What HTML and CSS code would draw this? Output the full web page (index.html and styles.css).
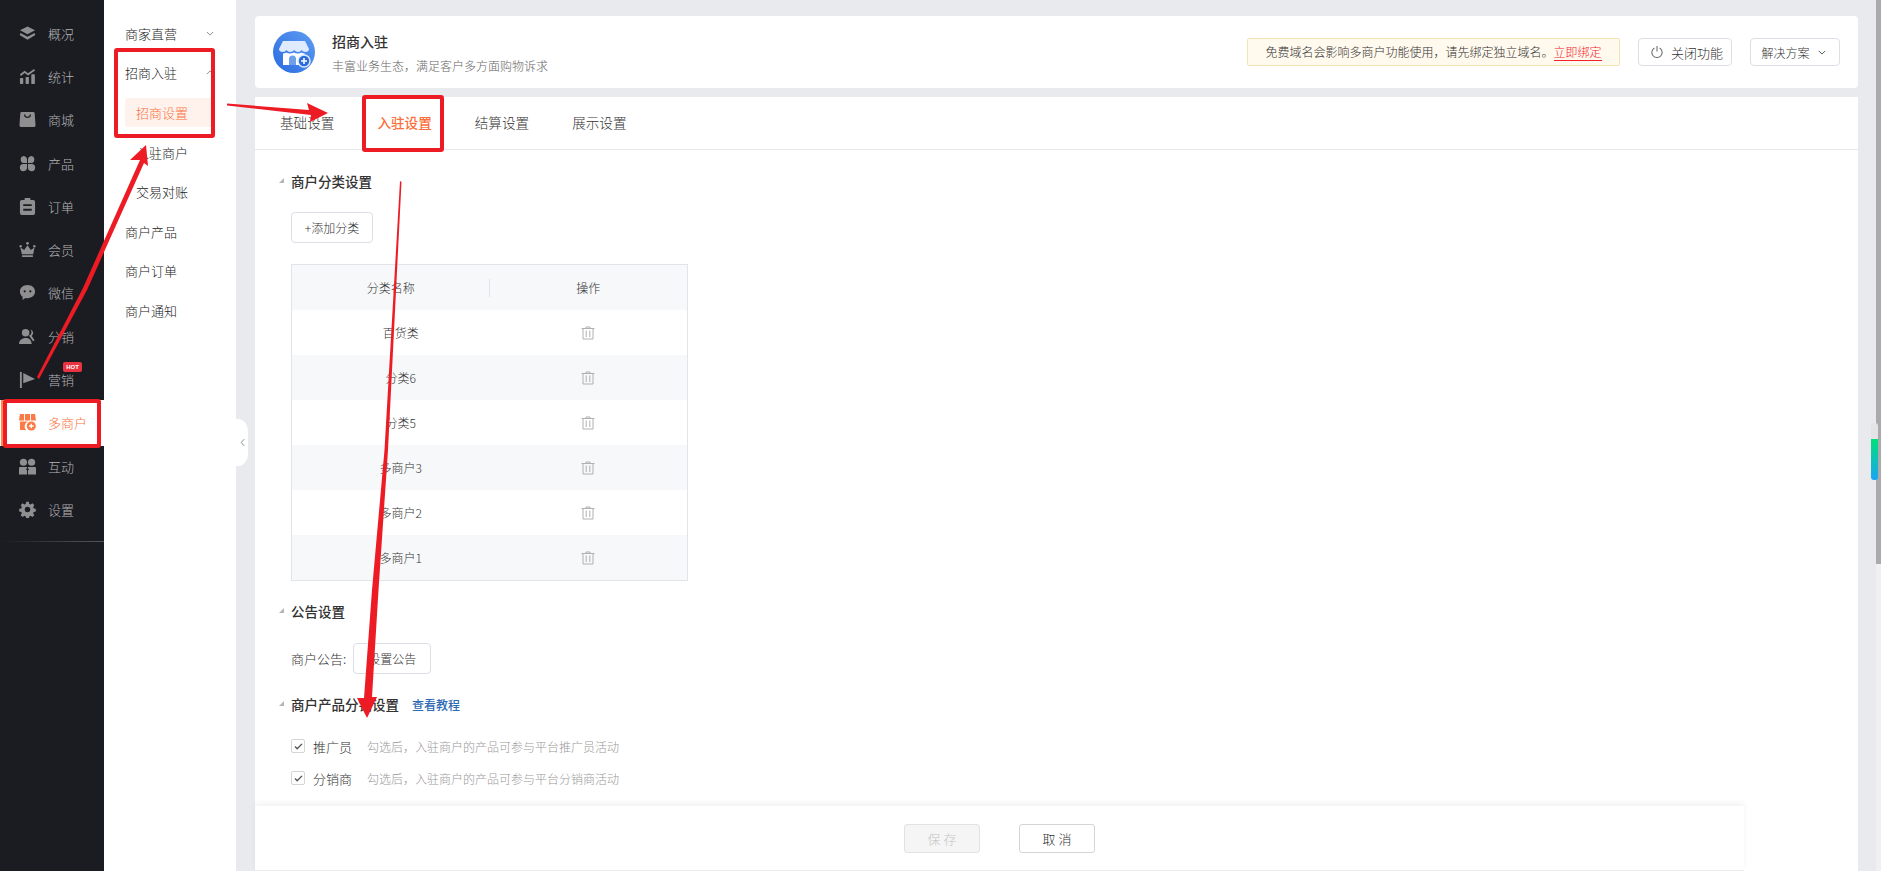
FILE: index.html
```html
<!DOCTYPE html>
<html lang="zh">
<head>
<meta charset="utf-8">
<title>招商入驻</title>
<link rel="stylesheet" href="styles.css">
</head>
<body>
<div class="app">
  <aside class="rail">
    <ul class="rail-list">
      <li class="rail-item"><svg class="ri" viewBox="0 0 18 18"><path d="M9 1.500 17 5.600 9 9.800 1 5.600z"/><path d="M1.600 8.600 9 12.400l7.400-3.800 .9 1.900L9 15.600.7 10.500z"/></svg>概况</li>
      <li class="rail-item"><svg class="ri" viewBox="0 0 18 18"><path d="M1 6.500 6 3l3.500 2.500L16 1l1 1.600-7.400 5.300L6 5.400 2 8.400z"/><rect x="1" y="10.500" width="3.500" height="6.500" rx=".8"/><rect x="7" y="9.500" width="3.500" height="7.500" rx=".8"/><rect x="13" y="6.500" width="3.800" height="10.500" rx=".8"/></svg>统计</li>
      <li class="rail-item"><svg class="ri" viewBox="0 0 18 18"><path fill-rule="evenodd" d="M3 1h12a1.600 1.600 0 0 1 1.600 1.500L17.500 15a2 2 0 0 1-2 2h-13a2 2 0 0 1-2-2L1.400 2.500A1.600 1.600 0 0 1 3 1zM5.300 3.600a3.700 3.700 0 0 0 7.400 0h-1.300a2.400 2.400 0 0 1-4.800 0z"/></svg>商城</li>
      <li class="rail-item"><svg class="ri" viewBox="0 0 18 18"><path d="M5 1a4 4 0 0 1 3.500 3.900V8.500H4.900A3.800 3.800 0 0 1 5 1zM13 1a3.800 3.800 0 0 1 .1 7.500H9.500V4.900A4 4 0 0 1 13 1zM4.900 9.500h3.600v3.600A3.800 3.800 0 1 1 4.900 9.500zM9.500 9.500h3.600a3.800 3.800 0 1 1-3.600 3.600z"/></svg>产品</li>
      <li class="rail-item"><svg class="ri" viewBox="0 0 18 18"><path fill-rule="evenodd" d="M6 0h6v2h3a2 2 0 0 1 2 2v12a2 2 0 0 1-2 2H3a2 2 0 0 1-2-2V4a2 2 0 0 1 2-2h3zM4.500 6.500v2h9v-2zM4.500 11.500v2h9v-2z"/></svg>订单</li>
      <li class="rail-item"><svg class="ri" viewBox="0 0 18 18"><circle cx="9" cy="2.500" r="1.500"/><circle cx="1.800" cy="5.500" r="1.300"/><circle cx="16.200" cy="5.500" r="1.300"/><path d="M9 4.500 12.500 9.500 16.500 7 15 14H3L1.500 7 5.500 9.500z"/><rect x="3" y="15" width="12" height="2" rx="1"/></svg>会员</li>
      <li class="rail-item"><svg class="ri" viewBox="0 0 18 18"><path fill-rule="evenodd" d="M9 1c4.700 0 8 3 8 7s-3.300 7-8 7c-.8 0-1.500-.1-2.200-.2L3.800 17v-3.500C2 12.200 1 10.200 1 8c0-4 3.300-7 8-7zM6 6.500a1.200 1.200 0 1 0 0 2.400 1.200 1.200 0 0 0 0-2.400zM12 6.500a1.200 1.200 0 1 0 0 2.400 1.200 1.200 0 0 0 0-2.400z"/></svg>微信</li>
      <li class="rail-item"><svg class="ri" viewBox="0 0 18 18"><circle cx="7" cy="5" r="4"/><path d="M0 17c0-4 3-6.500 7-6.500s6 2 6.500 6.500z"/><path d="M12 1.500a4 4 0 0 1 1.500 7l3 4.500-1.700 1-3-4.300-1.300-1.500a4 4 0 0 0 1.500-6.700z"/></svg>分销</li>
      <li class="rail-item"><svg class="ri" viewBox="0 0 18 18"><rect x="1" y="1" width="2" height="17"/><path d="M4.500 2 17 8.500 4.500 13z"/></svg>营销<span class="hot">HOT</span></li>
      <li class="rail-item rail-on"><svg class="ri" viewBox="0 0 18 18"><path d="M1 0h4.300v7H0zM6.300 0h5.400v7H6.300zM12.700 0H17l1 7h-5.300z"/><path d="M1 8h8.500a5.500 5.500 0 0 0-2 9H1z"/><circle cx="13" cy="12.700" r="4.800"/><path d="M12.300 10.300h1.400v1.700h1.700v1.400h-1.700v1.700h-1.400v-1.700h-1.700V12h1.700z" fill="#fff"/></svg>多商户</li>
      <li class="rail-item"><svg class="ri" viewBox="0 0 18 18"><circle cx="4.700" cy="4.500" r="3.800"/><circle cx="13.300" cy="4.500" r="3.800"/><path d="M1 9.500h7.500v1.500a1 1 0 0 0 0 2v4.500H0V10.500a1 1 0 0 1 1-1zM9.500 9.500H17a1 1 0 0 1 1 1v7H9.500V13a1 1 0 0 0 0-2z"/></svg>互动</li>
      <li class="rail-item"><svg class="ri" viewBox="0 0 18 18"><path fill-rule="evenodd" d="M7.400 0h3.200l.5 2.500 1.600.7 2.200-1.400 2.200 2.200-1.400 2.200.7 1.600 2.500.5v3.200l-2.500.5-.7 1.600 1.400 2.200-2.200 2.200-2.200-1.400-1.600.7-.5 2.500H7.400l-.5-2.500-1.600-.7-2.200 1.400L.9 15.800l1.400-2.200-.7-1.600L-.9 11.500V8.300l2.500-.5.7-1.600L.9 4l2.200-2.200 2.200 1.400 1.600-.7zM9 5.700a3.300 3.300 0 1 0 0 6.600 3.300 3.300 0 0 0 0-6.600z" transform="translate(1 .9) scale(.89)"/></svg>设置</li>
    </ul>
    <div class="rail-line"></div>
  </aside>

  <nav class="sub">
    <div class="sub-item">商家直营<svg class="chev" viewBox="0 0 10 6"><path d="M1 1l4 4 4-4"/></svg></div>
    <div class="sub-item">招商入驻<svg class="chev" viewBox="0 0 10 6"><path d="M1 5l4-4 4 4"/></svg></div>
    <div class="sub-child sub-on">招商设置</div>
    <div class="sub-child">入驻商户</div>
    <div class="sub-child">交易对账</div>
    <div class="sub-item">商户产品</div>
    <div class="sub-item">商户订单</div>
    <div class="sub-item">商户通知</div>
    <div class="collapse"><svg viewBox="0 0 6 10"><path d="M5 1 1.500 5 5 9"/></svg></div>
  </nav>

  <main class="main">
    <header class="head">
      <svg class="logo" viewBox="0 0 42 42">
        <defs><linearGradient id="lg" x1="0" y1="1" x2="1" y2="0"><stop offset="0" stop-color="#2a6be0"/><stop offset="1" stop-color="#5e9cf2"/></linearGradient></defs>
        <circle cx="21" cy="21" r="21" fill="url(#lg)"/>
        <path d="M10 10h22l4 8c0 1.800-1.600 3-3.500 3-1.700 0-2.900-.9-3.800-2-.8 1.200-2.200 2-3.700 2s-3-.8-3.900-2c-.9 1.200-2.300 2-3.900 2s-2.800-.8-3.700-2c-.9 1.100-2.100 2-3.800 2C7.600 21 6 19.800 6 18z" fill="#dfeafc"/>
        <path d="M10 22.500c1.200 0 2.300-.3 3.200-1 1.100.7 2.300 1 3.600 1s2.900-.4 4.100-1c1.200.6 2.500 1 3.900 1s2.600-.3 3.700-1c.9.6 2 1 3.200 1V34H10z" fill="#fff"/>
        <path d="M16 34v-6a3.500 3.500 0 0 1 7 0v6z" fill="#6f9fe9"/>
        <circle cx="31" cy="30" r="6" fill="#2a6be0" stroke="#dfeafc" stroke-width="1.500"/>
        <path d="M30.200 27h1.600v2.200H34v1.600h-2.200V33h-1.600v-2.200H28v-1.600h2.200z" fill="#fff"/>
      </svg>
      <div class="head-text">
        <div class="head-title">招商入驻</div>
        <div class="head-desc">丰富业务生态，满足客户多方面购物诉求</div>
      </div>
      <div class="head-actions">
        <div class="notice">免费域名会影响多商户功能使用，请先绑定独立域名。<a class="notice-link">立即绑定</a></div>
        <button class="btn btn-power"><svg class="power" viewBox="0 0 14 16"><path d="M4 3.300a6 6 0 1 0 6 0"/><path d="M7 1v6.500"/></svg>关闭功能</button>
        <button class="btn btn-solve">解决方案<svg class="chev chev-dark" viewBox="0 0 10 6"><path d="M1 1l4 4 4-4"/></svg></button>
      </div>
    </header>

    <section class="panel">
      <div class="tabs">
        <div class="tab">基础设置</div>
        <div class="tab tab-on">入驻设置</div>
        <div class="tab">结算设置</div>
        <div class="tab">展示设置</div>
      </div>
      <div class="body">
        <h3 class="sec">商户分类设置</h3>
        <button class="btn btn-add">+添加分类</button>
        <div class="table">
          <div class="tr th"><div class="td td-name">分类名称</div><div class="td">操作</div></div>
          <div class="tr"><div class="td td-val">百货类</div><div class="td"><svg class="trash" viewBox="0 0 14 14"><path d="M.5 2.500h13M5 2.500V1h4v1.500M2 2.500v10.500h10V2.500M5.200 4.500V11M8.800 4.500V11"/></svg></div></div>
          <div class="tr tr-alt"><div class="td td-val">分类6</div><div class="td"><svg class="trash" viewBox="0 0 14 14"><path d="M.5 2.500h13M5 2.500V1h4v1.500M2 2.500v10.500h10V2.500M5.200 4.500V11M8.800 4.500V11"/></svg></div></div>
          <div class="tr"><div class="td td-val">分类5</div><div class="td"><svg class="trash" viewBox="0 0 14 14"><path d="M.5 2.500h13M5 2.500V1h4v1.500M2 2.500v10.500h10V2.500M5.200 4.500V11M8.800 4.500V11"/></svg></div></div>
          <div class="tr tr-alt"><div class="td td-val">多商户3</div><div class="td"><svg class="trash" viewBox="0 0 14 14"><path d="M.5 2.500h13M5 2.500V1h4v1.500M2 2.500v10.500h10V2.500M5.200 4.500V11M8.800 4.500V11"/></svg></div></div>
          <div class="tr"><div class="td td-val">多商户2</div><div class="td"><svg class="trash" viewBox="0 0 14 14"><path d="M.5 2.500h13M5 2.500V1h4v1.500M2 2.500v10.500h10V2.500M5.200 4.500V11M8.800 4.500V11"/></svg></div></div>
          <div class="tr tr-alt"><div class="td td-val">多商户1</div><div class="td"><svg class="trash" viewBox="0 0 14 14"><path d="M.5 2.500h13M5 2.500V1h4v1.500M2 2.500v10.500h10V2.500M5.200 4.500V11M8.800 4.500V11"/></svg></div></div>
        </div>
        <h3 class="sec sec-notice">公告设置</h3>
        <div class="notice-row"><span class="label">商户公告:</span><button class="btn btn-set">设置公告</button></div>
        <h3 class="sec sec-prod">商户产品分销设置<a class="tut">查看教程</a></h3>
        <label class="check"><span class="box"><svg viewBox="0 0 10 8"><path d="M1 4l2.500 2.500L9 1"/></svg></span><span class="check-name">推广员</span><span class="hint">勾选后，入驻商户的产品可参与平台推广员活动</span></label>
        <label class="check"><span class="box"><svg viewBox="0 0 10 8"><path d="M1 4l2.500 2.500L9 1"/></svg></span><span class="check-name">分销商</span><span class="hint">勾选后，入驻商户的产品可参与平台分销商活动</span></label>
      </div>
    </section>

    <footer class="foot">
      <button class="btn-foot btn-save">保 存</button>
      <button class="btn-foot btn-cancel">取 消</button>
    </footer>
  </main>

  <div class="scroll"><div class="scroll-thumb"></div></div>
</div>

<svg class="marks" viewBox="0 0 1881 871">
  <g fill="none" stroke="#ed1c24" stroke-width="4">
    <rect x="116" y="50" width="97" height="86" rx="1"/>
    <rect x="5" y="401" width="94" height="45" rx="1"/>
    <rect x="364" y="97" width="78" height="53" rx="1"/>
  </g>
  <g fill="#ed1c24">
    <path d="M227 103.500 309 110 307 103 328 113 310 122 311 115 227 105.500z"/>
    <path d="M146 145 130 160 140 160 83 288 37 377 39 379 87 290 144 163 148 166z"/>
    <path d="M400 181 401.500 182 388 450 378.500 590 372 697 377 697 367 718 357 698 364 698 372 590 384.500 450z"/>
  </g>
</svg>
</body>
</html>
```

FILE: styles.css
```css
* { box-sizing: border-box; }
html, body { margin: 0; height: 100%; overflow: hidden; }
body {
  font-family: "Noto Sans CJK SC", "Noto Sans", sans-serif;
  font-size: 13px;
  font-weight: 300;
  color: #222;
  background: #e9eaee;
}
.app { display: flex; width: 1881px; height: 871px; position: relative; overflow: hidden; }

.rail { width: 104px; flex: none; background: #1b1c22; padding-top: 11.500px; }
.rail-list { list-style: none; margin: 0; padding: 0; }
.rail-item {
  position: relative;
  display: flex; align-items: center;
  height: 43.300px;
  padding-left: 18.500px;
  font-size: 13px;
  color: #b4b4b6;
}
.ri { width: 17px; height: 17px; margin-right: 12.500px; fill: #8f8f91; flex: none; }
.rail-on { background: #fff; color: #fb6f3c; box-shadow: 0 -1px 0 #fff, 0 2px 0 #fff; }
.rail-on::before { content: ""; position: absolute; left: 1px; top: -1px; bottom: -2px; width: 2px; background: #fb8a50; }
.rail-on .ri { fill: #fb7a45; }
.hot {
  position: absolute; left: 63px; top: 4px;
  width: 19px; height: 10px;
  background: #e93340; border-radius: 2px;
  color: #fff; font-size: 6px; line-height: 10px; font-weight: 700;
  text-align: center; font-family: "Liberation Sans", sans-serif;
}
.rail-line { height: 1px; margin-top: 10px; background: linear-gradient(90deg, #1b1c22, #55565a); }

.sub { width: 132px; flex: none; background: #fff; padding-top: 13.500px; position: relative; display: flex; flex-direction: column; align-items: flex-start; }
.sub-item, .sub-child {
  display: flex; align-items: center; justify-content: space-between;
  font-size: 13px; color: #222;
}
.sub-item { width: 100%; height: 39.600px; padding: 0 22px 0 21px; }
.sub-child { margin: 5.300px 0 5.300px 21px; padding-left: 11px; width: 88px; height: 29px; border-radius: 3px 0 0 3px; }
.sub-on { background: #fff2ed; color: #fb6f3c; }
.chev { width: 8px; height: 5px; fill: none; stroke: #8a8a8a; stroke-width: 1.200; flex: none; }
.collapse {
  position: absolute; right: -12px; top: 419px;
  width: 12px; height: 47px; background: #fff;
  border-radius: 0 10px 10px 0 / 0 12px 12px 0;
  display: flex; align-items: center; justify-content: center;
}
.collapse svg { width: 5px; height: 9px; fill: none; stroke: #8a8a8a; stroke-width: 1.200; }

.main { width: 1603px; margin-left: 19px; flex: none; position: relative; padding-top: 16px; }
.head {
  height: 72px; background: #fff; border-radius: 4px;
  display: flex; align-items: center; padding: 0 18px 0 18px;
}
.logo { width: 42px; height: 42px; flex: none; }
.head-text { margin-left: 17px; padding-top: 2px; }
.head-title { font-size: 14px; font-weight: 500; color: #333; line-height: 19px; }
.head-desc { font-size: 12px; color: #666; line-height: 18px; margin-top: 6px; }
.head-actions { margin-left: auto; display: flex; align-items: center; }
.notice {
  width: 373px; height: 28px; line-height: 26px; text-align: center;
  background: #fff9ee; border: 1px solid #f6e3b5; border-radius: 2px;
  font-size: 12px; color: #333; white-space: nowrap;
}
.notice-link { color: #f5222d; border-bottom: 1px solid #f5222d; }
.btn {
  font-family: inherit; font-weight: 300; background: #fff; border: 1px solid #dcdfe6; border-radius: 4px;
  color: #333; font-size: 12px; padding: 0; display: inline-flex; align-items: center; justify-content: center;
}
.btn-power { width: 94px; height: 28px; margin-left: 18px; font-size: 13px; padding-left: 4px; }
.power { width: 12px; height: 14px; margin-right: 8px; fill: none; stroke: #666; stroke-width: 1.200; }
.btn-solve { width: 90px; height: 28px; margin-left: 18px; font-size: 12px; padding-right: 3px; }
.chev-dark { margin-left: 8px; stroke: #555; }

.panel { margin-top: 9px; height: 774px; background: #fff; }
.tabs { display: flex; height: 53px; border-bottom: 1px solid #e8e8e8; padding-left: 25px; }
.tab { width: 54px; margin-right: 43.400px; line-height: 51px; font-size: 13.600px; color: #333; white-space: nowrap; }
.tab-on { color: #fb6f3c; font-weight: 500; }
.body { padding: 21px 36px; }
.sec {
  position: relative; margin: 0; font-size: 13.500px; font-weight: 500; color: #333; line-height: 20px; height: 20px;
}
.sec::before {
  content: ""; position: absolute; left: -12px; top: 7px;
  border-style: solid; border-width: 0 0 5px 5px; border-color: transparent transparent #b5b5b5 transparent;
}
.btn-add { display: flex; margin-top: 21px; width: 82px; height: 31px; }
.table { margin-top: 21px; width: 397px; border: 1px solid #e3e4ea; }
.tr { display: flex; height: 45px; align-items: center; }
.th, .tr-alt { background: #f7f8fa; }
.td { flex: 1 1 50%; min-width: 0; text-align: center; font-size: 12px; color: #333; display: flex; justify-content: center; align-items: center; }
.td-name { position: relative; }
.td-name::after { content: ""; position: absolute; right: 0; top: 0; height: 18px; width: 1px; background: #e3e4ea; }
.td-val { padding-left: 20px; }
.trash { width: 14px; height: 14px; fill: none; stroke: #b0b0b0; stroke-width: 1; }
.sec-notice { margin-top: 20px; }
.notice-row { display: flex; align-items: center; margin-top: 22px; }
.label { font-size: 13px; color: #333; }
.btn-set { width: 78px; height: 31px; margin-left: 7px; }
.sec-prod { margin-top: 20px; }
.tut { margin-left: 13px; color: #2d6ab5; font-weight: 500; font-size: 12px; }
.check { display: flex; align-items: center; height: 32px; }
.sec-prod + .check { margin-top: 16px; }
.box {
  width: 14px; height: 14px; border: 1px solid #d5d5d5; border-radius: 2px;
  display: flex; align-items: center; justify-content: center; margin-right: 8px; flex: none;
}
.box svg { width: 9px; height: 7px; fill: none; stroke: #555; stroke-width: 1.600; }
.check-name { font-size: 13px; color: #333; width: 39px; }
.hint { font-size: 12px; color: #999; margin-left: 15px; }

.foot {
  position: absolute; left: 0; top: 806px; width: 1489px; height: 65px; background: #fff;
  box-shadow: 0 -3px 6px rgba(0,0,0,.05);
  display: flex; align-items: flex-start; justify-content: center; gap: 39px; padding-top: 18px;
  border-bottom: 1px solid #e9eaee;
}
.btn-foot { font-family: inherit; font-weight: 300; font-size: 13px; width: 76px; height: 29px; border-radius: 3px; padding: 0; }
.btn-save { background: #f5f5f5; border: 1px solid #e2e2e2; color: #c5c5c5; }
.btn-cancel { background: #fff; border: 1px solid #d5d5d5; color: #333; }

.scroll { position: absolute; right: 0; top: 0; width: 5px; height: 100%; background: linear-gradient(#aaa 0, #aaa 564px, #f0f0f0 564px); }
.scroll-thumb {
  position: absolute; left: -5px; top: 423px; width: 7px; height: 57px; border-radius: 3px;
  background: linear-gradient(#e4e4e6 0, #e4e4e6 16px, #00e07a 16px, #1aa5f5 100%);
}

.marks { position: absolute; left: 0; top: 0; width: 1881px; height: 871px; pointer-events: none; }
```
